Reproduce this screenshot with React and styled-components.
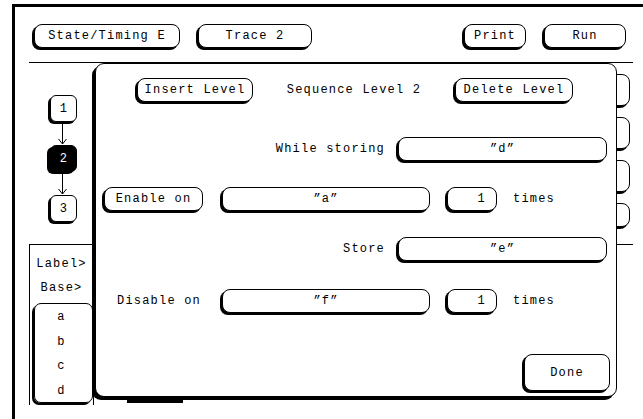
import React from "react";
import styled, { createGlobalStyle } from "styled-components";

const Global = createGlobalStyle`
  html, body { margin: 0; padding: 0; background: #fff; }
  body { font-family: "Liberation Mono", "DejaVu Sans Mono", monospace; }
`;

const Screen = styled.div`
  position: relative;
  width: 643px;
  height: 419px;
  overflow: hidden;
  background: #fff;
  color: #000;
  font-family: "Liberation Mono", "DejaVu Sans Mono", monospace;
  font-size: 12px;
  letter-spacing: 1.2px;
`;

const Frame = styled.div`
  box-sizing: border-box;
  margin: 4px 0 0 12px;
  width: 631px;
  height: 415px;
  border-left: 3px solid #000;
  border-top: 3px solid #000;
  display: flex;
  flex-direction: column;
`;

const TopBar = styled.div`
  display: flex;
  align-items: flex-start;
  height: 55px;
  box-sizing: border-box;
  padding: 17px 17px 0 19px;
  gap: 18px;
`;

const Btn = styled.div`
  box-sizing: border-box;
  flex: none;
  width: ${(p) => p.$w}px;
  height: ${(p) => p.$h || 24}px;
  margin-left: ${(p) => p.$ml || 0}px;
  border: 1px solid #000;
  border-radius: 8px;
  box-shadow: -2px 2px 0 0 #000;
  background: #fff;
  display: flex;
  align-items: center;
  justify-content: ${(p) => (p.$right ? "flex-end" : "center")};
  padding-right: ${(p) => (p.$right ? 10 : 0)}px;
  white-space: nowrap;
`;

const Spacer = styled.div`
  flex: 1;
`;

const Rule = styled.div`
  margin-left: 14px;
  width: 604px;
  border-top: 1px solid #000;
`;

const Upper = styled.div`
  display: flex;
  height: 181px;
  width: 618px;
`;

const Steps = styled.div`
  display: flex;
  flex-direction: column;
  align-items: flex-start;
  padding: 32px 0 0 35px;
`;

const Step = styled.div`
  box-sizing: border-box;
  width: 27px;
  height: 27px;
  border: 1px solid #000;
  border-radius: 6px;
  background: ${(p) => (p.$active ? "#000" : "#fff")};
  color: ${(p) => (p.$active ? "#fff" : "#000")};
  box-shadow: ${(p) => (p.$active ? "-3px 2px 0 0 #000" : "-2px 2px 0 0 #000")};
  display: flex;
  align-items: center;
  justify-content: center;
  padding-left: 1px;
`;

const Arrow = styled.svg`
  display: block;
  width: 27px;
  height: 23px;
`;

const Tabs = styled.div`
  margin-left: auto;
  margin-right: 3px;
  padding-top: 11px;
  display: flex;
  flex-direction: column;
  gap: 11px;
`;

const Tab = styled.div`
  box-sizing: border-box;
  width: 40px;
  height: ${(p) => p.$h}px;
  border: 1px solid #000;
  border-radius: 8px;
  box-shadow: -2px 2px 0 0 #000;
  background: #fff;
`;

const Lower = styled.div`
  flex: 1;
  display: flex;
  align-items: flex-start;
`;

const LabelBox = styled.div`
  box-sizing: border-box;
  margin-left: 14px;
  width: 65px;
  height: 160px;
  border-left: 1px solid #000;
  border-right: 1px solid #000;
  display: flex;
  flex-direction: column;
  align-items: center;
  padding-top: 7px;
`;

const LabelRow = styled.div`
  flex: none;
  height: 24px;
  line-height: 24px;
  text-align: center;
`;

const List = styled.div`
  box-sizing: border-box;
  flex: none;
  align-self: flex-start;
  margin-left: 4px;
  margin-top: 3px;
  width: 59px;
  height: 100px;
  border: 1px solid #000;
  border-radius: 7px;
  box-shadow: -2px 2px 0 0 #000;
  display: flex;
  flex-direction: column;
  align-items: center;
  padding: 1px 4px 0 0;
`;

const ListItem = styled.div`
  flex: none;
  height: 24.5px;
  line-height: 24.5px;
`;

const Bar = styled.div`
  align-self: flex-end;
  margin: 0 0 16px 33px;
  width: 56px;
  height: 3px;
  background: #000;
`;

const Dialog = styled.div`
  position: absolute;
  left: 95px;
  top: 63px;
  width: 522px;
  height: 334px;
  box-sizing: border-box;
  border: 1px solid #000;
  border-radius: 9px;
  box-shadow: -3px 3px 0 0 #000;
  background: #fff;
  display: flex;
  flex-direction: column;
  z-index: 2;
`;

const Row = styled.div`
  display: flex;
  align-items: center;
  margin-top: ${(p) => p.$mt}px;
`;

const Title = styled.div`
  width: 202px;
  text-align: center;
  white-space: nowrap;
`;

const Label = styled.div`
  box-sizing: border-box;
  flex: none;
  width: ${(p) => p.$w}px;
  text-align: ${(p) => (p.$right ? "right" : "left")};
  padding-left: ${(p) => p.$pl || 0}px;
  margin-right: ${(p) => p.$mr || 0}px;
  white-space: nowrap;
`;

const Cell = styled.div`
  flex: none;
  width: ${(p) => p.$w}px;
  display: flex;
  align-items: center;
`;

const Times = styled.div`
  margin-left: 16px;
`;

function ArrowDown() {
  return (
    <Arrow viewBox="0 0 27 23">
      <line x1="12.5" y1="0" x2="12.5" y2="22" stroke="#000" strokeWidth="1" />
      <polyline points="8.5,17 12.5,22 16.5,17" fill="none" stroke="#000" strokeWidth="1" />
    </Arrow>
  );
}

function CountRow({ mt, first, field }) {
  return (
    <Row $mt={mt}>
      <Cell $w={126}>{first}</Cell>
      <Btn $w={208}>{field}</Btn>
      <Btn $w={50} $ml={17} $right>1</Btn>
      <Times>times</Times>
    </Row>
  );
}

function FieldRow({ mt, label, value }) {
  return (
    <Row $mt={mt}>
      <Label $w={289} $right $mr={13}>{label}</Label>
      <Btn $w={209}>{value}</Btn>
    </Row>
  );
}

export default function App() {
  return (
    <Screen>
      <Global />
      <Frame>
        <TopBar>
          <Btn $w={146}>State/Timing E</Btn>
          <Btn $w={114}>Trace 2</Btn>
          <Spacer />
          <Btn $w={62}>Print</Btn>
          <Btn $w={82}>Run</Btn>
        </TopBar>
        <Rule />
        <Upper>
          <Steps>
            <Step>1</Step>
            <ArrowDown />
            <Step $active>2</Step>
            <ArrowDown />
            <Step>3</Step>
          </Steps>
          <Tabs>
            <Tab $h={32} />
            <Tab $h={32} />
            <Tab $h={32} />
            <Tab $h={24} />
          </Tabs>
        </Upper>
        <Rule />
        <Lower>
          <LabelBox>
            <LabelRow>Label&gt;</LabelRow>
            <LabelRow>Base&gt;</LabelRow>
            <List>
              <ListItem>a</ListItem>
              <ListItem>b</ListItem>
              <ListItem>c</ListItem>
              <ListItem>d</ListItem>
            </List>
          </LabelBox>
          <Bar />
        </Lower>
      </Frame>

      <Dialog>
        <Row $mt={14}>
          <Btn $w={116} $ml={41}>Insert Level</Btn>
          <Title>Sequence Level 2</Title>
          <Btn $w={118}>Delete Level</Btn>
        </Row>
        <FieldRow mt={35} label="While storing" value="”d”" />
        <CountRow mt={26} first={<Btn $w={99} $ml={8}>Enable on</Btn>} field="”a”" />
        <FieldRow mt={26} label="Store" value="”e”" />
        <CountRow mt={28} first={<Label $w={126} $pl={21}>Disable on</Label>} field="”f”" />
        <Row $mt={41}>
          <Btn $w={86} $h={37} $ml={428}>Done</Btn>
        </Row>
      </Dialog>
    </Screen>
  );
}
